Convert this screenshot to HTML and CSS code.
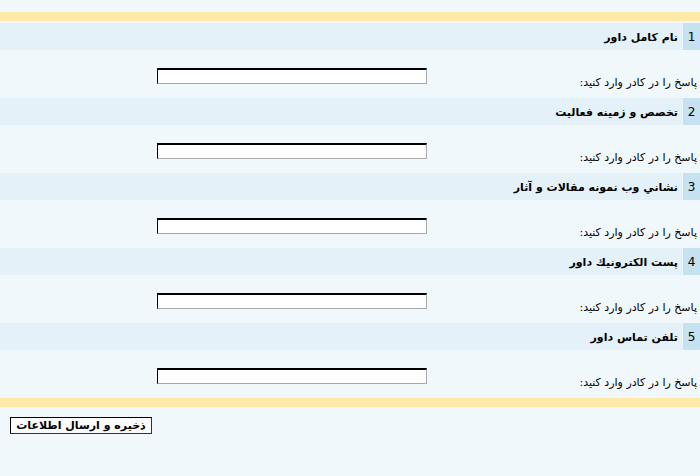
FILE: index.html
```html
<!DOCTYPE html>
<html lang="fa">
<head>
<meta charset="utf-8">
<title>فرم داور</title>
<link rel="stylesheet" href="styles.css">
</head>
<body>
<div class="page">
  <div class="bar"></div>
  <div class="question">
    <div class="qhead"><span class="num">1</span><span class="qtitle">نام كامل داور</span></div>
    <div class="answer"><span class="label">پاسخ را در کادر وارد کنید:</span><input class="field" type="text"></div>
  </div>
  <div class="question">
    <div class="qhead"><span class="num">2</span><span class="qtitle">تخصص و زمينه فعاليت</span></div>
    <div class="answer"><span class="label">پاسخ را در کادر وارد کنید:</span><input class="field" type="text"></div>
  </div>
  <div class="question">
    <div class="qhead"><span class="num">3</span><span class="qtitle">نشاني وب نمونه مقالات و آثار</span></div>
    <div class="answer"><span class="label">پاسخ را در کادر وارد کنید:</span><input class="field" type="text"></div>
  </div>
  <div class="question">
    <div class="qhead"><span class="num">4</span><span class="qtitle">پست الكترونيك داور</span></div>
    <div class="answer"><span class="label">پاسخ را در کادر وارد کنید:</span><input class="field" type="text"></div>
  </div>
  <div class="question">
    <div class="qhead"><span class="num">5</span><span class="qtitle">تلفن تماس داور</span></div>
    <div class="answer"><span class="label">پاسخ را در کادر وارد کنید:</span><input class="field" type="text"></div>
  </div>
  <div class="bar bar-bottom"></div>
  <div class="actions"><button class="submit" type="button">ذخيره و ارسال اطلاعات</button></div>
</div>
</body>
</html>
```
FILE: styles.css
```css
html, body {
  margin: 0;
  padding: 0;
  background: #f0f8fc;
}
body {
  font-family: "DejaVu Sans", Tahoma, sans-serif;
  font-size: 11px;
  color: #000;
}
.page {
  padding-top: 12px;
}
.bar {
  height: 9px;
  background: #ffe9a8;
}
.question {
  direction: rtl;
  padding-top: 2px;
}
.qhead {
  display: flex;
  height: 27px;
  background: #e5f1f8;
  align-items: stretch;
}
.num {
  width: 17px;
  background: #c6e1f0;
  display: flex;
  align-items: center;
  justify-content: center;
  font-size: 12px;
  color: #000;
  border-left: 1px solid #eaf4f9;
}
.qtitle {
  display: flex;
  align-items: center;
  padding-right: 4px;
  padding-top: 1px;
  font-weight: bold;
  font-size: 11px;
}
.answer {
  display: flex;
  justify-content: space-between;
  align-items: center;
  height: 46px;
  background: #f0f8fc;
  padding-right: 3px;
  box-sizing: border-box;
}
.label {
  margin-top: 18px;
  font-size: 11px;
}
.field {
  width: 270px;
  height: 16px;
  box-sizing: border-box;
  margin: 6px 0 0 157px;
  padding: 0;
  background: #fff;
  border-top: 2px solid #000;
  border-left: 1px solid #000;
  border-right: 1px solid #a9a9a9;
  border-bottom: 1px solid #a9a9a9;
}
.bar-bottom {
  margin-top: 2px;
}
.actions {
  padding: 10px 0 0 10px;
}
.submit {
  width: 142px;
  height: 17px;
  padding: 0;
  font-family: "DejaVu Sans", Tahoma, sans-serif;
  font-size: 11px;
  font-weight: bold;
  background: #fbfbfb;
  border: 1px solid #000;
  border-right-color: #333;
  border-bottom-color: #333;
  color: #000;
  direction: rtl;
  line-height: 15px;
}
```
